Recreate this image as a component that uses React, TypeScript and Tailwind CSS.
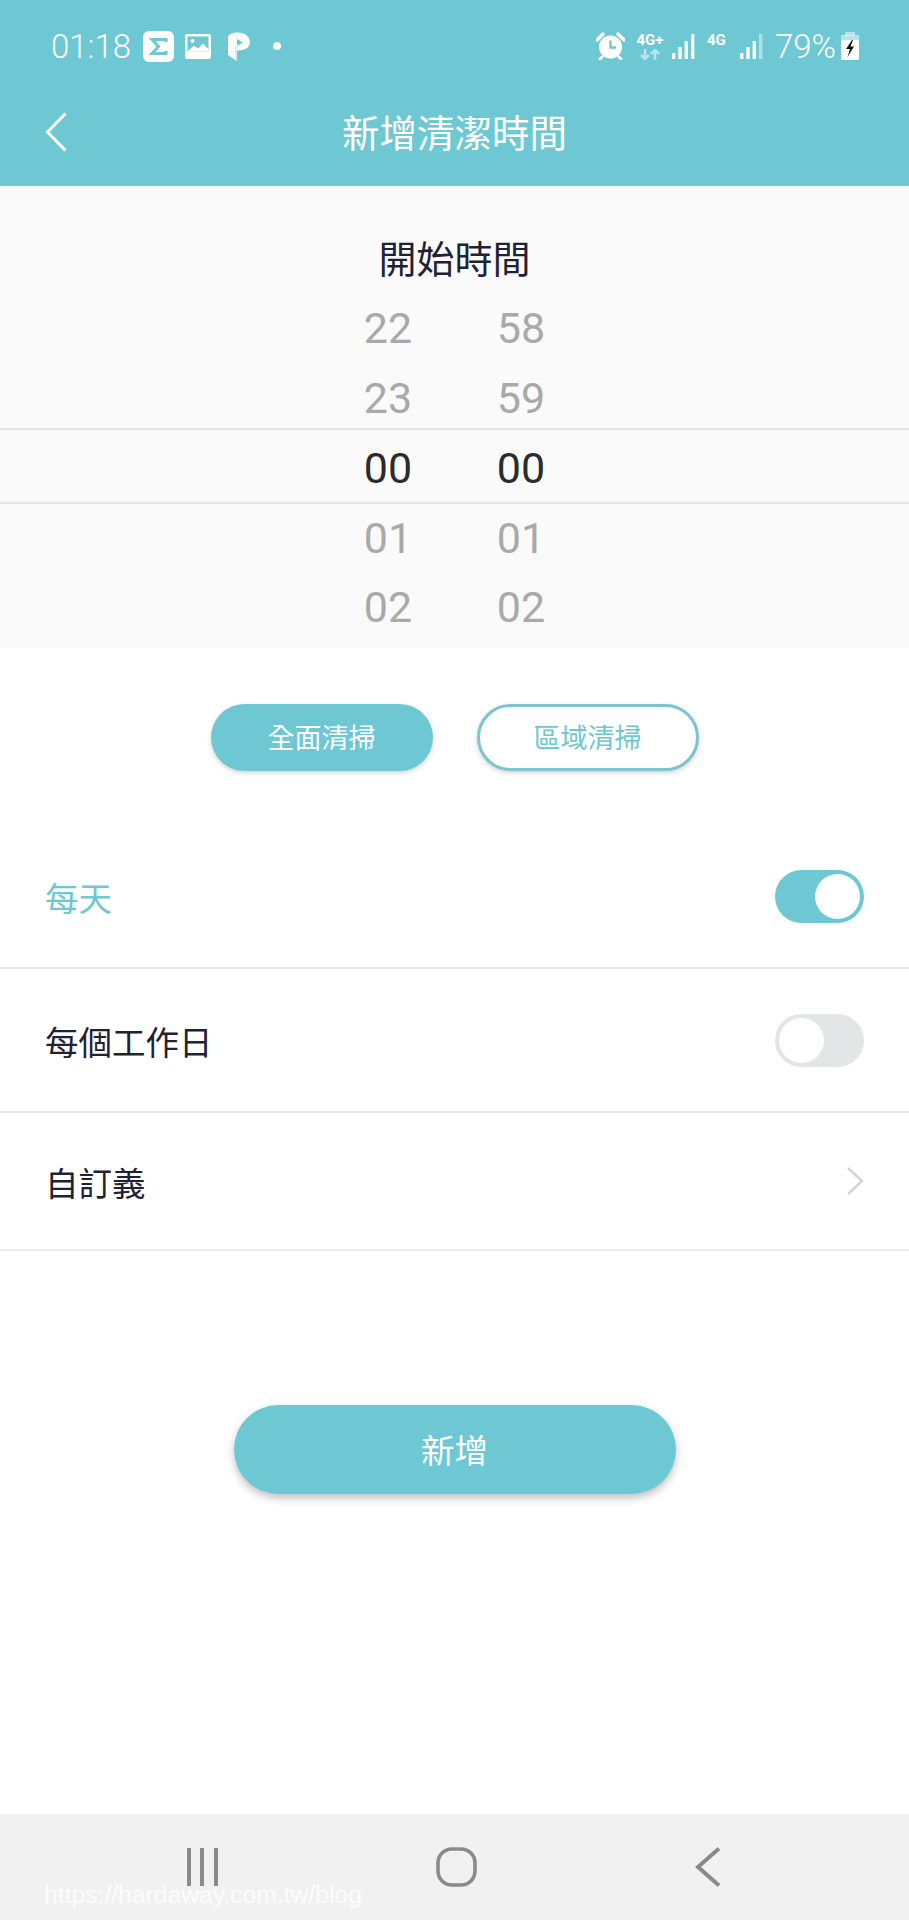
import React from "react";

const cjk = "font-['Noto_Sans_CJK_TC','Noto_Sans',sans-serif]";

function Signal({ dim }: { dim?: boolean }) {
  const bars = [
    { x: 0, h: 6 },
    { x: 6.3, h: 12 },
    { x: 12.6, h: 18 },
    { x: 19, h: 25 },
  ];
  return (
    <svg width="23" height="25" viewBox="0 0 23 25" fill="#fff">
      {bars.map((b, i) => (
        <rect key={i} x={b.x} y={25 - b.h} width="3.4" height={b.h} opacity={dim && i === 3 ? 0.45 : 1} />
      ))}
    </svg>
  );
}

function StatusBar() {
  return (
    <div className="flex h-[92px] items-center justify-between pl-[51px] pr-[50px] text-white">
      <div className="flex items-center">
        <span className="font-['Roboto',sans-serif] text-[33px] font-light leading-none">01:18</span>
        <svg className="ml-[12px]" width="31" height="31" viewBox="0 0 31 31">
          <rect width="31" height="31" rx="6" fill="#fff" />
          <path d="M23 11V8.5H9L15.5 15.5L9 22.5H23V20" fill="none" stroke="#6dc8d3" strokeWidth="3" />
        </svg>
        <svg className="ml-[11px]" width="26" height="25" viewBox="0 0 26 25">
          <rect width="26" height="25" rx="2" fill="#fff" />
          <rect x="2.5" y="2.5" width="21" height="15" fill="#6dc8d3" />
          <circle cx="7.5" cy="7" r="2" fill="#fff" />
          <path d="M2.5 17.5L9 11.5L13 14.5L18 9.5L23.5 15V17.5Z" fill="#fff" />
        </svg>
        <svg className="ml-[17px]" width="22" height="29" viewBox="0 0 22 29">
          <path d="M8 0.5C16 0 22 4 22 10.5C22 15.5 17 18.5 9 18.5V29L2 24.5C0.5 23.5 0 22.5 0 20.5V6C0 3 3 1 8 0.5Z" fill="#fff" />
          <path d="M9 7L15 10.5L9 14Z" fill="#6dc8d3" />
          <path d="M9 14L9 18.5V28.5L7 27V14Z" fill="#d8f0f3" />
        </svg>
        <span className="ml-[23px] h-[8px] w-[8px] rounded-full bg-white" />
      </div>
      <div className="flex items-center">
        <svg width="29" height="28" viewBox="0 0 29 28">
          <circle cx="14.5" cy="15" r="11.5" fill="#fff" />
          <path d="M14.5 8.5V15.5H20" fill="none" stroke="#6dc8d3" strokeWidth="2.4" />
          <path d="M1 8L7 2M28 8L22 2" stroke="#fff" strokeWidth="3.4" strokeLinecap="round" />
          <path d="M6 25L4 27M23 25L25 27" stroke="#fff" strokeWidth="3" strokeLinecap="round" />
        </svg>
        <div className="ml-[12px] flex w-[26px] flex-col items-center">
          <span className="font-['Roboto',sans-serif] text-[15px] font-bold leading-[14px]">4G+</span>
          <svg className="mt-[2px]" width="20" height="11" viewBox="0 0 20 11" fill="none" stroke="#fff" strokeOpacity="0.5" strokeWidth="2.6">
            <path d="M5 0V10M1 6L5 10L9 6M15 11V1M11 5L15 1L19 5" />
          </svg>
        </div>
        <div className="ml-[9px]">
          <Signal />
        </div>
        <span className="mb-[13px] ml-[12px] w-[20px] font-['Roboto',sans-serif] text-[15px] font-bold leading-[14px]">4G</span>
        <div className="ml-[13px]">
          <Signal dim />
        </div>
        <span className="ml-[12px] font-['Roboto',sans-serif] text-[33px] font-light leading-none">79%</span>
        <svg className="ml-[5px]" width="18" height="28" viewBox="0 0 18 28">
          <rect x="4" y="0" width="10" height="4" fill="#fff" opacity="0.5" />
          <rect x="0" y="3" width="18" height="7" fill="#fff" opacity="0.5" />
          <rect x="0" y="8" width="18" height="20" rx="1" fill="#fff" />
          <path d="M11 8L5 17H9L6.5 25L13 14.5H9.5L12 8Z" fill="#111" />
        </svg>
      </div>
    </div>
  );
}

function NavBar() {
  return (
    <div className="relative flex h-[94px] items-start justify-center pt-[16px]">
      <svg className="absolute left-[45px] top-[20px]" width="22" height="40" viewBox="0 0 22 40" fill="none" stroke="#fff" strokeWidth="3">
        <path d="M20.5 1.5L2.5 20L20.5 38.5" />
      </svg>
      <h1 className={`${cjk} text-[37.5px] font-normal leading-[46px] text-white`}>新增清潔時間</h1>
    </div>
  );
}

const pickerRows = [
  ["22", "58"],
  ["23", "59"],
  ["00", "00"],
  ["01", "01"],
  ["02", "02"],
];

function TimePicker() {
  return (
    <section className="h-[462px] bg-[#fafafa]">
      <h2 className={`${cjk} pt-[46px] text-center text-[38px] font-normal leading-[50px] text-[#1f2235]`}>開始時間</h2>
      <div className="mt-[11px] font-['Roboto',sans-serif] text-[43px] leading-[70px]">
        {pickerRows.map((row, i) => (
          <div
            key={row[0] + row[1]}
            className={
              i === 2
                ? "-mt-[5px] flex h-[76px] items-center justify-center border-y-2 border-[#e6e6e6] pt-[4px] text-[#2b2b2b]"
                : i === 3
                  ? "flex h-[68px] items-center justify-center text-[#a9a9a9]"
                  : "flex h-[70px] items-center justify-center text-[#a9a9a9]"
            }
          >
            <span className="w-[133px] text-center">{row[0]}</span>
            <span className="w-[133px] text-center">{row[1]}</span>
          </div>
        ))}
      </div>
    </section>
  );
}

function Toggle({ on }: { on?: boolean }) {
  return (
    <span
      className={
        on
          ? "flex h-[53px] w-[89px] items-center justify-end rounded-full bg-[#6dc8d3] px-[4px]"
          : "flex h-[53px] w-[89px] items-center justify-start rounded-full bg-[#e4e5e7] px-[4px]"
      }
    >
      <span className="h-[45px] w-[45px] rounded-full bg-white" />
    </span>
  );
}

function OptionRow({ label, right, active, h }: { label: string; right: React.ReactNode; active?: boolean; h: string }) {
  return (
    <div className={`flex items-center justify-between border-b-2 border-[#e9e9e9] pl-[45px] pr-[45px] ${h}`}>
      <span className={`${cjk} pt-[2px] text-[33.5px] leading-none ${active ? "text-[#6dc8d3]" : "text-[#1f2235]"}`}>{label}</span>
      {right}
    </div>
  );
}

function BottomBar() {
  return (
    <div className="relative flex h-[106px] items-start bg-[#f1f1f1] pt-[33px]">
      <svg className="absolute left-[187px] top-[34px]" width="32" height="38" viewBox="0 0 32 38" fill="#8a8a8a">
        <rect x="0" width="4" height="38" />
        <rect x="13" width="4" height="38" />
        <rect x="27" width="4" height="38" />
      </svg>
      <svg className="absolute left-[436px] top-[33px]" width="41" height="40" viewBox="0 0 41 40" fill="none" stroke="#8a8a8a" strokeWidth="3.6">
        <rect x="2" y="2" width="37" height="36" rx="14" />
      </svg>
      <svg className="absolute left-[695px] top-[33px]" width="26" height="40" viewBox="0 0 26 40" fill="none" stroke="#8a8a8a" strokeWidth="4">
        <path d="M24 1.5L3 20L24 38.5" />
      </svg>
      <span className="absolute left-[44px] top-[66px] font-['Liberation_Sans',sans-serif] text-[24.7px] leading-[30px] text-white/80">
        https://hardaway.com.tw/blog
      </span>
    </div>
  );
}

export default function App() {
  return (
    <div className="flex h-[1920px] w-[909px] flex-col overflow-hidden bg-white">
      <header className="h-[186px] bg-[#6dc8d3]">
        <StatusBar />
        <NavBar />
      </header>
      <TimePicker />
      <div className="mt-[56px] flex justify-center gap-[44px]">
        <button className={`${cjk} h-[67px] w-[222px] rounded-full bg-[#6dc8d3] text-[27px] text-white shadow-[0_2px_5px_rgba(0,0,0,0.18)]`}>全面清掃</button>
        <button className={`${cjk} h-[67px] w-[222px] rounded-full border-[3px] border-[#7cc5ce] bg-white text-[27px] text-[#6dc8d3] shadow-[0_2px_5px_rgba(0,0,0,0.18)]`}>區域清掃</button>
      </div>
      <div className="mt-[54px]">
        <OptionRow label="每天" active h="h-[144px]" right={<Toggle on />} />
        <OptionRow label="每個工作日" h="h-[144px]" right={<Toggle />} />
        <OptionRow
          label="自訂義"
          h="h-[138px]"
          right={
            <svg width="18" height="30" viewBox="0 0 18 30" fill="none" stroke="#d4d4d4" strokeWidth="2.5">
              <path d="M2 2L16 15L2 28" />
            </svg>
          }
        />
      </div>
      <div className="mt-[154px] flex justify-center">
        <button className={`${cjk} h-[89px] w-[442px] rounded-full bg-[#6dc8d3] text-[33.5px] text-white shadow-[0_4px_8px_rgba(0,0,0,0.25)]`}>新增</button>
      </div>
      <div className="flex-1" />
      <BottomBar />
    </div>
  );
}
